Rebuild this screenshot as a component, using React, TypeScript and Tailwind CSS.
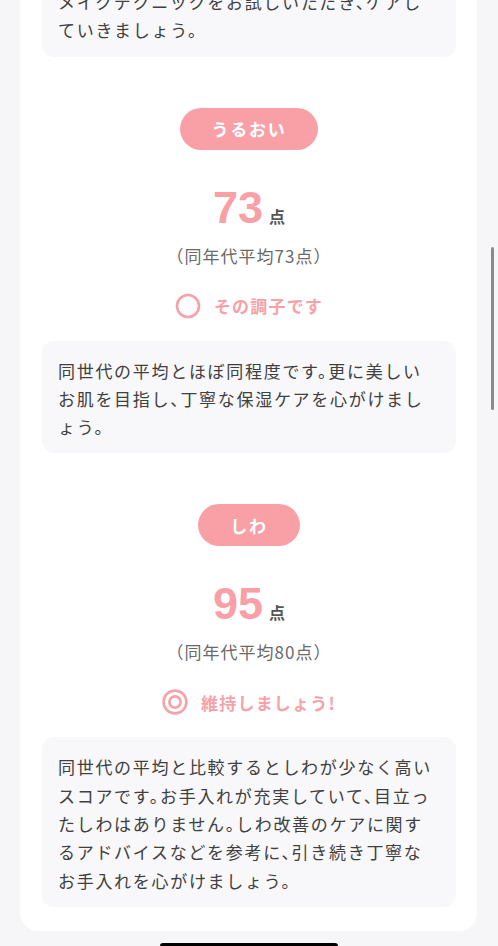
const jp = "font-['Noto_Sans_CJK_JP','Noto_Sans',sans-serif]";

function SingleCircle() {
  return (
    <svg width="26" height="26" viewBox="0 0 26 26" fill="none">
      <circle cx="13" cy="13" r="11" stroke="#f7a1a8" strokeWidth="2.6" />
    </svg>
  );
}

function DoubleCircle() {
  return (
    <svg width="26" height="26" viewBox="0 0 26 26" fill="none">
      <circle cx="13" cy="13" r="11.4" stroke="#f7a1a8" strokeWidth="2.6" />
      <circle cx="13" cy="13" r="5.6" stroke="#f7a1a8" strokeWidth="2.6" />
    </svg>
  );
}

function TextBox({ lines, className = '' }: { lines: string[]; className?: string }) {
  return (
    <div className={`bg-[#f8f7fa] rounded-[12px] px-4 pt-4 pb-3 ${className}`}>
      <p className={`${jp} text-[17px] leading-[28.3px] tracking-[0.1em] text-[#404040] whitespace-nowrap [font-feature-settings:'halt']`}>
        {lines.map((l, i) => (
          <span key={i} className="block">{l}</span>
        ))}
      </p>
    </div>
  );
}

type SectionProps = {
  label: string;
  score: number;
  avg: number;
  mark: 'single' | 'double';
  status: string;
  lines: string[];
};

function ScoreSection({ label, score, avg, mark, status, lines }: SectionProps) {
  return (
    <section className="flex flex-col items-center mt-[51px]">
      <div className={`${jp} h-[42px] px-8 rounded-full bg-[#f9a0a7] flex items-center text-white font-bold text-[17px] tracking-[0.1em]`}>
        {label}
      </div>
      <div className="mt-[36px] flex items-baseline gap-[6px]">
        <span className="font-['Liberation_Sans',Arial,sans-serif] font-bold text-[45px] leading-[44px] text-[#f9a0a7]">
          {score}
        </span>
        <span className={`${jp} font-bold text-[16px] text-[#555]`}>点</span>
      </div>
      <div className={`${jp} mt-[13px] text-[17px] leading-[26px] tracking-[0.06em] text-[#6a6a6a]`}>
        （同年代平均{avg}点）
      </div>
      <div className="mt-[24px] h-[26px] flex items-center gap-[13px]">
        {mark === 'single' ? <SingleCircle /> : <DoubleCircle />}
        <span className={`${jp} font-bold text-[17px] tracking-[0.07em] text-[#f7a1a8]`}>{status}</span>
      </div>
      <TextBox lines={lines} className="mt-[22px] self-stretch" />
    </section>
  );
}

export default function App() {
  return (
    <div className="relative min-h-screen bg-[#f6f6f8] overflow-hidden">
      <div className="ml-5 w-[457px] -mt-[28px] bg-white rounded-b-[18px] pl-[22px] pr-[21px] pb-[24px]">
        <TextBox lines={['メイクテクニックをお試しいただき、ケアし', 'ていきましょう。']} />
        <ScoreSection
          label="うるおい"
          score={73}
          avg={73}
          mark="single"
          status="その調子です"
          lines={[
            '同世代の平均とほぼ同程度です。更に美しい',
            'お肌を目指し、丁寧な保湿ケアを心がけまし',
            'ょう。',
          ]}
        />
        <ScoreSection
          label="しわ"
          score={95}
          avg={80}
          mark="double"
          status="維持しましょう!"
          lines={[
            '同世代の平均と比較するとしわが少なく高い',
            'スコアです。お手入れが充実していて、目立っ',
            'たしわはありません。しわ改善のケアに関す',
            'るアドバイスなどを参考に、引き続き丁寧な',
            'お手入れを心がけましょう。',
          ]}
        />
      </div>
      <div className="absolute right-[4px] top-[247px] w-[3px] h-[163px] rounded-full bg-[#8a8a8a]" />
      <div className="absolute left-[160px] bottom-[-3px] w-[178px] h-[6px] rounded-full bg-black" />
    </div>
  );
}
